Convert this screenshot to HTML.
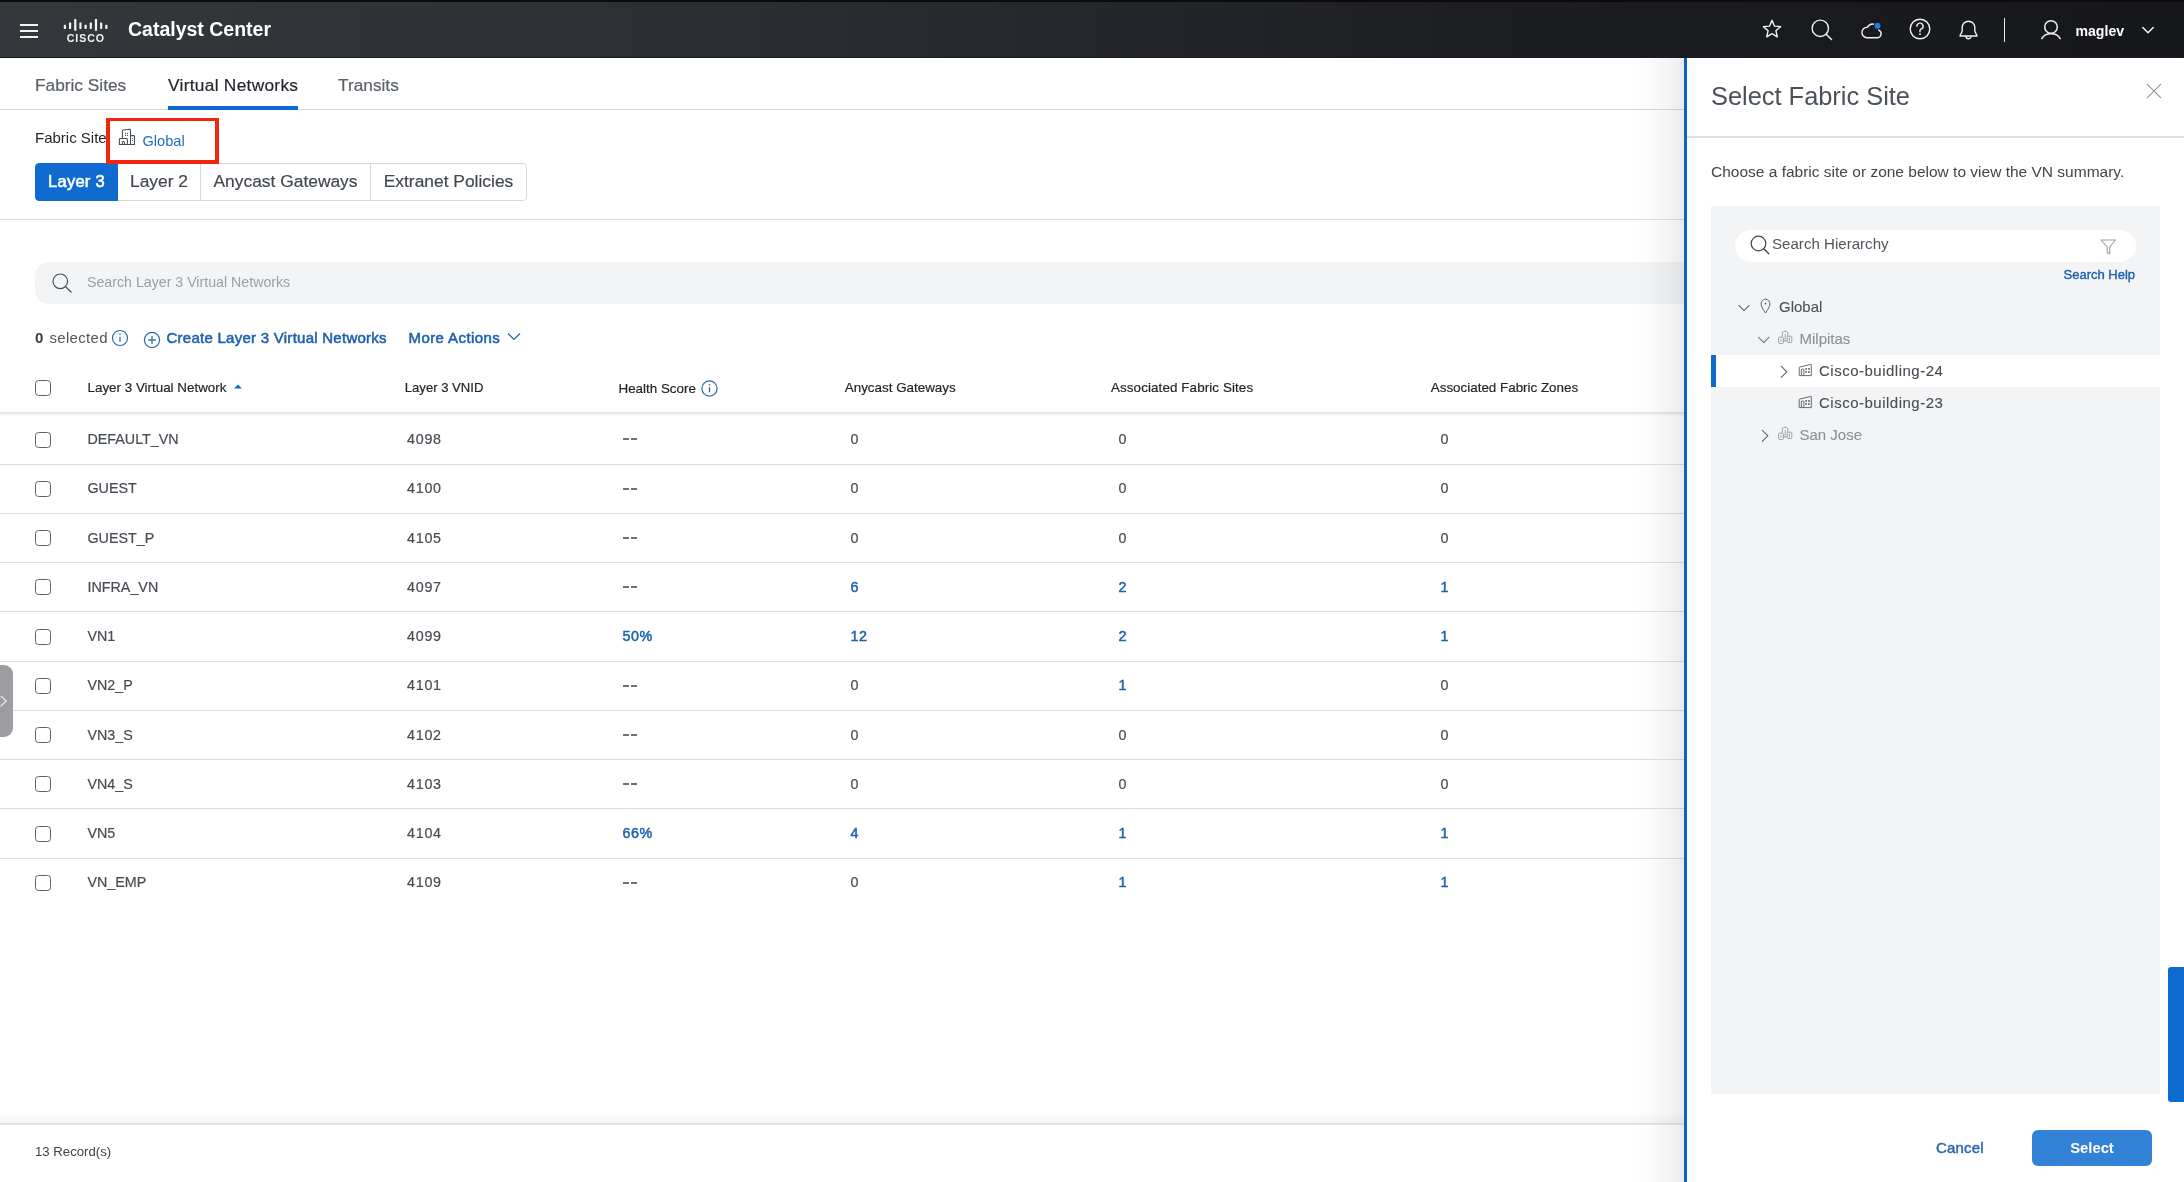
<!DOCTYPE html>
<html><head><meta charset="utf-8">
<style>
*{box-sizing:border-box;margin:0;padding:0}
html,body{width:2184px;height:1182px;overflow:hidden;background:#fff;font-family:"Liberation Sans",sans-serif;position:relative}
.a{position:absolute;white-space:nowrap}
svg{position:absolute;overflow:visible}
#hdr{position:absolute;left:0;top:0;width:2184px;height:58px;background:linear-gradient(90deg,#34383d 0%,#2a2d32 35%,#1b1d21 70%,#15171a 100%);border-top:2px solid #0b0b0c;border-bottom:1px solid #1a1b1e}
.tab{font-size:17.3px;color:#5b6168;top:75px;line-height:20px}
.seg{position:absolute;top:163px;height:38px;border:1px solid #d6d8db;font-size:17.4px;color:#424850;line-height:34px;text-align:center}
.th{font-size:13.4px;color:#1f2328;top:380px;line-height:16px}
.td{font-size:14.3px;color:#474c53;line-height:18px}
.lk{color:#1e62b2;font-weight:700}
.lm{color:#1f61b0;font-weight:400;-webkit-text-stroke:0.55px currentColor}
.cb{position:absolute;width:16px;height:16px;border:1.3px solid #5e6268;border-radius:3.5px;background:#fff}
.dash{position:absolute;width:5.7px;height:2px;background:#6d7278}
.rl{position:absolute;left:0;width:1684px;height:1px;background:#dcdee0}
#root{position:absolute;left:0;top:0;width:2184px;height:1182px;will-change:transform}
.td,.th,.tab,.seg{-webkit-text-stroke:0.2px currentColor}
</style></head><body><div id="root">
<div id="hdr"></div>
<!-- hamburger -->
<div class="a" style="left:20px;top:24px;width:18px;height:2.2px;background:#f2f2f2"></div>
<div class="a" style="left:20px;top:30px;width:18px;height:2.2px;background:#f2f2f2"></div>
<div class="a" style="left:20px;top:36px;width:18px;height:2.2px;background:#f2f2f2"></div>
<!-- cisco logo -->
<svg style="left:0;top:0" width="120" height="50" viewBox="0 0 120 50"><g fill="#f4f4f4"><rect x="63.80" y="24.8" width="2.2" height="4.1" rx="0.6"/><rect x="68.98" y="22.4" width="2.2" height="6.5" rx="0.6"/><rect x="74.16" y="18.9" width="2.2" height="11.9" rx="0.6"/><rect x="79.34" y="22.4" width="2.2" height="6.5" rx="0.6"/><rect x="84.52" y="24.8" width="2.2" height="4.1" rx="0.6"/><rect x="89.70" y="22.4" width="2.2" height="6.5" rx="0.6"/><rect x="94.88" y="18.9" width="2.2" height="11.9" rx="0.6"/><rect x="100.06" y="22.4" width="2.2" height="6.5" rx="0.6"/><rect x="105.24" y="24.8" width="2.2" height="4.1" rx="0.6"/></g><text x="85.8" y="41.6" text-anchor="middle" font-family="Liberation Sans" font-weight="700" font-size="10.6" fill="#f4f4f4" letter-spacing="0.9">CISCO</text></svg>
<div class="a" style="left:128px;top:17px;font-size:19.5px;font-weight:700;color:#fff;line-height:24px">Catalyst Center</div>

<!-- header right icons -->
<svg style="left:1762px;top:19px" width="20" height="20" viewBox="0 0 20 20"><path d="M10 1.3 L12.4 7.1 L18.6 7.6 L13.9 11.7 L15.3 17.8 L10 14.6 L4.7 17.8 L6.1 11.7 L1.4 7.6 L7.6 7.1 Z" fill="none" stroke="#f0f0f0" stroke-width="1.4" stroke-linejoin="round"/></svg>
<svg style="left:1811px;top:19px" width="22" height="22" viewBox="0 0 22 22"><circle cx="9.3" cy="9.3" r="8.2" fill="none" stroke="#f0f0f0" stroke-width="1.4"/><line x1="15.2" y1="15.2" x2="20.5" y2="20.5" stroke="#f0f0f0" stroke-width="1.5" stroke-linecap="round"/></svg>
<svg style="left:1861px;top:21px" width="23" height="19" viewBox="0 0 23 19"><path d="M6 16.8 H16.5 A4 4 0 0 0 17.8 9.2 A6 6 0 0 0 6.5 6.2 A5.3 5.3 0 0 0 6 16.8 Z" fill="none" stroke="#f0f0f0" stroke-width="1.4"/><circle cx="16.5" cy="4.8" r="3.6" fill="#1e7ae0" stroke="#17191d" stroke-width="1"/></svg>
<svg style="left:1909px;top:18px" width="22" height="22" viewBox="0 0 22 22"><circle cx="11" cy="11" r="9.8" fill="none" stroke="#f0f0f0" stroke-width="1.4"/><path d="M7.9 8.3 A3.1 3.1 0 1 1 11.9 11.2 C11.2 11.5 11 12 11 12.8 V13.8" fill="none" stroke="#f0f0f0" stroke-width="1.4" stroke-linecap="round"/><circle cx="11" cy="16.2" r="0.9" fill="#f0f0f0"/></svg>
<svg style="left:1958px;top:19px" width="21" height="22" viewBox="0 0 21 22"><path d="M2 17 C2 15.5 4.2 14 4.2 11.5 V8.5 A6.3 6.3 0 0 1 16.8 8.5 V11.5 C16.8 14 19 15.5 19 17 Z" fill="none" stroke="#f0f0f0" stroke-width="1.4" stroke-linejoin="round"/><path d="M8 17.2 A2.5 2.5 0 0 0 13 17.2" fill="none" stroke="#f0f0f0" stroke-width="1.4"/></svg>
<div class="a" style="left:2003.6px;top:18px;width:1.6px;height:24px;background:#e8e8e8"></div>
<svg style="left:2040px;top:19px" width="23" height="22" viewBox="0 0 23 22"><circle cx="11" cy="8" r="6.3" fill="none" stroke="#f0f0f0" stroke-width="1.5"/><path d="M1.8 19.6 A10 8 0 0 1 20.2 19.6" fill="none" stroke="#f0f0f0" stroke-width="1.5" stroke-linecap="round"/></svg>
<div class="a" style="left:2075.5px;top:21px;font-size:14.1px;font-weight:700;color:#fff;line-height:20px">maglev</div>
<svg style="left:2141px;top:26px" width="14" height="9" viewBox="0 0 14 9"><path d="M1.8 1.5 L7 6.7 L12.2 1.5" fill="none" stroke="#f0f0f0" stroke-width="1.6" stroke-linecap="round"/></svg>

<!-- tabs -->
<div class="a tab" style="left:35px">Fabric Sites</div>
<div class="a tab" style="left:168px;color:#22272d;letter-spacing:0.3px">Virtual Networks</div>
<div class="a tab" style="left:338px">Transits</div>
<div class="a" style="left:0;top:109px;width:1684px;height:1px;background:#d5d7da"></div>
<div class="a" style="left:168px;top:106px;width:130px;height:4px;background:#0d6bd0"></div>

<!-- fabric site -->
<div class="a" style="left:35px;top:129px;font-size:15px;color:#23272c;line-height:18px">Fabric Site:</div>
<div class="a" style="left:106px;top:118px;width:113px;height:46px;border:4px solid #f2260a;border-top-width:3px;z-index:5"></div>
<svg style="left:115px;top:124px" width="24" height="24" viewBox="0 0 24 24"><g fill="none" stroke="#474c53" stroke-width="1.05" stroke-linejoin="round"><path d="M7.4 14.5 V7 Q7.4 6.1 8.3 6 L14.6 5.3 Q15.5 5.3 15.5 6.2 V20.5"/><path d="M15.5 11.6 H18.6 Q19.5 11.6 19.5 12.5 V20.5 H4.4 V15.4 Q4.4 14.5 5.3 14.5 H11.5 Q12.4 14.5 12.4 15.4 V20.5"/><path d="M7.3 20.5 V18.5 A1.1 1.1 0 0 1 9.5 18.5 V20.5"/></g><g fill="#474c53"><circle cx="10.5" cy="9.4" r="0.6"/><circle cx="12.5" cy="9.4" r="0.6"/><circle cx="10.5" cy="11.4" r="0.6"/><circle cx="12.5" cy="11.4" r="0.6"/><circle cx="17.5" cy="14.5" r="0.6"/><circle cx="17.5" cy="16.5" r="0.6"/></g></svg>
<div class="a" style="left:142.5px;top:132px;font-size:14.6px;color:#1f6bc0;line-height:18px">Global</div>

<!-- segmented -->
<div class="seg" style="left:35px;width:83px;background:#0f6bcf;border-color:#0f6bcf;color:#fff;font-weight:400;font-size:16.5px;letter-spacing:0.25px;-webkit-text-stroke:0.6px #fff;border-radius:4px 0 0 4px">Layer 3</div>
<div class="seg" style="left:118px;width:83px;border-left:none">Layer 2</div>
<div class="seg" style="left:200px;width:171px">Anycast Gateways</div>
<div class="seg" style="left:370px;width:157px;border-radius:0 4px 4px 0">Extranet Policies</div>
<div class="a" style="left:0;top:219px;width:1684px;height:1px;background:#dcdee1"></div>

<!-- search bar -->
<div class="a" style="left:35px;top:262px;width:1700px;height:42px;background:#f3f4f6;border-radius:14px 0 0 14px"></div>
<svg style="left:52px;top:273px" width="21" height="20" viewBox="0 0 21 20"><circle cx="8.3" cy="8.3" r="7.3" fill="none" stroke="#4a4f55" stroke-width="1.2"/><line x1="13.6" y1="13.6" x2="19" y2="19" stroke="#4a4f55" stroke-width="1.3" stroke-linecap="round"/></svg>
<div class="a" style="left:87px;top:273px;font-size:14.2px;color:#9ba0a6;line-height:18px">Search Layer 3 Virtual Networks</div>

<!-- selected row -->
<div class="a" style="left:35px;top:329px;font-size:15px;color:#3a3f45;line-height:18px;font-weight:700">0</div><div class="a" style="left:49.5px;top:329px;font-size:15px;color:#50565c;line-height:18px;letter-spacing:0.3px">selected</div>
<svg style="left:111px;top:329px" width="18" height="18" viewBox="0 0 18 18"><circle cx="9" cy="9" r="7.5" fill="none" stroke="#2d66ad" stroke-width="1.2"/><line x1="9" y1="7.8" x2="9" y2="12.8" stroke="#2d66ad" stroke-width="1.3"/><circle cx="9" cy="5.3" r="0.8" fill="#2d66ad"/></svg>
<svg style="left:143px;top:331px" width="18" height="18" viewBox="0 0 18 18"><circle cx="9" cy="9" r="7.6" fill="none" stroke="#2d66ad" stroke-width="1.2"/><line x1="9" y1="5" x2="9" y2="13" stroke="#2d66ad" stroke-width="1.3"/><line x1="5" y1="9" x2="13" y2="9" stroke="#2d66ad" stroke-width="1.3"/></svg>
<div class="a lm" style="left:166.5px;top:329px;font-size:15px;line-height:18px;letter-spacing:0.26px">Create Layer 3 Virtual Networks</div>
<div class="a lm" style="left:408.5px;top:329px;font-size:15px;line-height:18px;letter-spacing:0.42px">More Actions</div>
<svg style="left:507px;top:332px" width="14" height="10" viewBox="0 0 14 10"><path d="M1 1.5 L7 7.5 L13 1.5" fill="none" stroke="#1f61b0" stroke-width="1.2"/></svg>

<!-- table header -->
<div class="cb" style="left:35px;top:380px"></div>
<div class="a th" style="left:87.5px;letter-spacing:0px">Layer 3 Virtual Network</div>
<svg style="left:233px;top:384px" width="10" height="5" viewBox="0 0 10 5"><path d="M1 4.5 L5 0.5 L9 4.5 Z" fill="#0d6bd0"/></svg>
<div class="a th" style="left:404.8px;font-size:13.1px">Layer 3 VNID</div>
<div class="a th" style="left:618.5px;top:381px">Health Score</div>
<svg style="left:700px;top:379px" width="19" height="19" viewBox="0 0 19 19"><circle cx="9.5" cy="9.5" r="7.6" fill="none" stroke="#2d66ad" stroke-width="1.2"/><line x1="9.5" y1="8.3" x2="9.5" y2="13.3" stroke="#2d66ad" stroke-width="1.3"/><circle cx="9.5" cy="5.8" r="0.8" fill="#2d66ad"/></svg>
<div class="a th" style="left:844.8px">Anycast Gateways</div>
<div class="a th" style="left:1111px;letter-spacing:0.1px">Associated Fabric Sites</div>
<div class="a th" style="left:1430.8px;letter-spacing:0px">Associated Fabric Zones</div>
<div class="a" style="left:0;top:412px;width:1684px;height:2px;background:#e4e6e8"></div>
<div class="a" style="left:0;top:414px;width:1684px;height:2px;background:linear-gradient(#f0f1f2,#fff)"></div>

<div id="rows"><div class="cb" style="left:35px;top:432px"></div>
<div class="a td" style="left:87.5px;top:430.0px">DEFAULT_VN</div>
<div class="a td" style="left:407px;top:430.0px;letter-spacing:0.75px">4098</div>
<div class="a dash" style="left:623px;top:438px"></div><div class="a dash" style="left:631.3px;top:438px"></div>
<div class="a td" style="left:850.5px;top:430.0px;letter-spacing:0.6px">0</div>
<div class="a td" style="left:1118.5px;top:430.0px;letter-spacing:0.6px">0</div>
<div class="a td" style="left:1440.5px;top:430.0px;letter-spacing:0.6px">0</div>
<div class="rl" style="top:464px"></div>
<div class="cb" style="left:35px;top:481px"></div>
<div class="a td" style="left:87.5px;top:479.2px">GUEST</div>
<div class="a td" style="left:407px;top:479.2px;letter-spacing:0.75px">4100</div>
<div class="a dash" style="left:623px;top:488px"></div><div class="a dash" style="left:631.3px;top:488px"></div>
<div class="a td" style="left:850.5px;top:479.2px;letter-spacing:0.6px">0</div>
<div class="a td" style="left:1118.5px;top:479.2px;letter-spacing:0.6px">0</div>
<div class="a td" style="left:1440.5px;top:479.2px;letter-spacing:0.6px">0</div>
<div class="rl" style="top:513px"></div>
<div class="cb" style="left:35px;top:530px"></div>
<div class="a td" style="left:87.5px;top:528.5px">GUEST_P</div>
<div class="a td" style="left:407px;top:528.5px;letter-spacing:0.75px">4105</div>
<div class="a dash" style="left:623px;top:537px"></div><div class="a dash" style="left:631.3px;top:537px"></div>
<div class="a td" style="left:850.5px;top:528.5px;letter-spacing:0.6px">0</div>
<div class="a td" style="left:1118.5px;top:528.5px;letter-spacing:0.6px">0</div>
<div class="a td" style="left:1440.5px;top:528.5px;letter-spacing:0.6px">0</div>
<div class="rl" style="top:562px"></div>
<div class="cb" style="left:35px;top:579px"></div>
<div class="a td" style="left:87.5px;top:577.8px">INFRA_VN</div>
<div class="a td" style="left:407px;top:577.8px;letter-spacing:0.75px">4097</div>
<div class="a dash" style="left:623px;top:586px"></div><div class="a dash" style="left:631.3px;top:586px"></div>
<div class="a td" style="left:850.5px;top:577.8px;letter-spacing:0.6px;color:#1f61b0;-webkit-text-stroke:0.5px #1f61b0">6</div>
<div class="a td" style="left:1118.5px;top:577.8px;letter-spacing:0.6px;color:#1f61b0;-webkit-text-stroke:0.5px #1f61b0">2</div>
<div class="a td" style="left:1440.5px;top:577.8px;letter-spacing:0.6px;color:#1f61b0;-webkit-text-stroke:0.5px #1f61b0">1</div>
<div class="rl" style="top:611px"></div>
<div class="cb" style="left:35px;top:629px"></div>
<div class="a td" style="left:87.5px;top:627.0px">VN1</div>
<div class="a td" style="left:407px;top:627.0px;letter-spacing:0.75px">4099</div>
<div class="a td" style="left:622.5px;top:627.0px;letter-spacing:0.6px;color:#1f61b0;-webkit-text-stroke:0.5px #1f61b0">50%</div>
<div class="a td" style="left:850.5px;top:627.0px;letter-spacing:0.6px;color:#1f61b0;-webkit-text-stroke:0.5px #1f61b0">12</div>
<div class="a td" style="left:1118.5px;top:627.0px;letter-spacing:0.6px;color:#1f61b0;-webkit-text-stroke:0.5px #1f61b0">2</div>
<div class="a td" style="left:1440.5px;top:627.0px;letter-spacing:0.6px;color:#1f61b0;-webkit-text-stroke:0.5px #1f61b0">1</div>
<div class="rl" style="top:661px"></div>
<div class="cb" style="left:35px;top:678px"></div>
<div class="a td" style="left:87.5px;top:676.2px">VN2_P</div>
<div class="a td" style="left:407px;top:676.2px;letter-spacing:0.75px">4101</div>
<div class="a dash" style="left:623px;top:685px"></div><div class="a dash" style="left:631.3px;top:685px"></div>
<div class="a td" style="left:850.5px;top:676.2px;letter-spacing:0.6px">0</div>
<div class="a td" style="left:1118.5px;top:676.2px;letter-spacing:0.6px;color:#1f61b0;-webkit-text-stroke:0.5px #1f61b0">1</div>
<div class="a td" style="left:1440.5px;top:676.2px;letter-spacing:0.6px">0</div>
<div class="rl" style="top:710px"></div>
<div class="cb" style="left:35px;top:727px"></div>
<div class="a td" style="left:87.5px;top:725.5px">VN3_S</div>
<div class="a td" style="left:407px;top:725.5px;letter-spacing:0.75px">4102</div>
<div class="a dash" style="left:623px;top:734px"></div><div class="a dash" style="left:631.3px;top:734px"></div>
<div class="a td" style="left:850.5px;top:725.5px;letter-spacing:0.6px">0</div>
<div class="a td" style="left:1118.5px;top:725.5px;letter-spacing:0.6px">0</div>
<div class="a td" style="left:1440.5px;top:725.5px;letter-spacing:0.6px">0</div>
<div class="rl" style="top:759px"></div>
<div class="cb" style="left:35px;top:776px"></div>
<div class="a td" style="left:87.5px;top:774.8px">VN4_S</div>
<div class="a td" style="left:407px;top:774.8px;letter-spacing:0.75px">4103</div>
<div class="a dash" style="left:623px;top:783px"></div><div class="a dash" style="left:631.3px;top:783px"></div>
<div class="a td" style="left:850.5px;top:774.8px;letter-spacing:0.6px">0</div>
<div class="a td" style="left:1118.5px;top:774.8px;letter-spacing:0.6px">0</div>
<div class="a td" style="left:1440.5px;top:774.8px;letter-spacing:0.6px">0</div>
<div class="rl" style="top:808px"></div>
<div class="cb" style="left:35px;top:826px"></div>
<div class="a td" style="left:87.5px;top:824.0px">VN5</div>
<div class="a td" style="left:407px;top:824.0px;letter-spacing:0.75px">4104</div>
<div class="a td" style="left:622.5px;top:824.0px;letter-spacing:0.6px;color:#1f61b0;-webkit-text-stroke:0.5px #1f61b0">66%</div>
<div class="a td" style="left:850.5px;top:824.0px;letter-spacing:0.6px;color:#1f61b0;-webkit-text-stroke:0.5px #1f61b0">4</div>
<div class="a td" style="left:1118.5px;top:824.0px;letter-spacing:0.6px;color:#1f61b0;-webkit-text-stroke:0.5px #1f61b0">1</div>
<div class="a td" style="left:1440.5px;top:824.0px;letter-spacing:0.6px;color:#1f61b0;-webkit-text-stroke:0.5px #1f61b0">1</div>
<div class="rl" style="top:858px"></div>
<div class="cb" style="left:35px;top:875px"></div>
<div class="a td" style="left:87.5px;top:873.2px">VN_EMP</div>
<div class="a td" style="left:407px;top:873.2px;letter-spacing:0.75px">4109</div>
<div class="a dash" style="left:623px;top:882px"></div><div class="a dash" style="left:631.3px;top:882px"></div>
<div class="a td" style="left:850.5px;top:873.2px;letter-spacing:0.6px">0</div>
<div class="a td" style="left:1118.5px;top:873.2px;letter-spacing:0.6px;color:#1f61b0;-webkit-text-stroke:0.5px #1f61b0">1</div>
<div class="a td" style="left:1440.5px;top:873.2px;letter-spacing:0.6px;color:#1f61b0;-webkit-text-stroke:0.5px #1f61b0">1</div></div><!--rowsend-->

<!-- footer -->
<div class="a" style="left:0;top:1112px;width:1684px;height:12px;background:linear-gradient(rgba(255,255,255,0),rgba(235,236,238,0.6))"></div>
<div class="a" style="left:0;top:1123px;width:1684px;height:2px;background:#e3e5e7"></div>
<div class="a" style="left:35px;top:1144px;font-size:13.2px;color:#3d434a;line-height:16px">13 Record(s)</div>

<!-- left collapse tab -->
<div class="a" style="left:-10px;top:665px;width:23px;height:72px;background:#9c9da1;border-radius:9px"></div>
<svg style="left:0;top:695px" width="8" height="13" viewBox="0 0 8 13"><path d="M0.6 0.8 L6.3 6 L0.6 11.4" fill="none" stroke="#f4f4f5" stroke-width="1.1"/></svg>

<!-- panel shadow -->
<div class="a" style="left:1628px;top:58px;width:56px;height:1124px;background:linear-gradient(90deg,rgba(0,0,0,0),rgba(0,0,0,0.012) 35%,rgba(0,0,0,0.04) 70%,rgba(0,0,0,0.08))"></div>
<!-- panel -->
<div class="a" style="left:1684px;top:58px;width:500px;height:1124px;background:#fff;border-left:3px solid #1361b8"></div>
<div class="a" style="left:1711px;top:80.5px;font-size:25.4px;color:#4a5159;line-height:30px">Select Fabric Site</div>
<svg style="left:2145px;top:82px" width="18" height="18" viewBox="0 0 18 18"><path d="M2 2 L16 16 M16 2 L2 16" stroke="#7b8086" stroke-width="1.05"/></svg>
<div class="a" style="left:1687px;top:136px;width:497px;height:2px;background:#dfe1e4"></div>
<div class="a" style="left:1711px;top:163px;font-size:15.5px;color:#40464d;line-height:18px;letter-spacing:0px">Choose a fabric site or zone below to view the VN summary.</div>

<div class="a" style="left:1711px;top:206px;width:449px;height:888px;background:#f3f4f6"></div>
<div class="a" style="left:1735px;top:230px;width:401px;height:32px;background:#fff;border-radius:16px"></div>
<svg style="left:1750px;top:235px" width="20" height="20" viewBox="0 0 20 20"><circle cx="8.5" cy="8.5" r="7.3" fill="none" stroke="#3f444a" stroke-width="1.2"/><line x1="13.8" y1="13.8" x2="18.8" y2="18.8" stroke="#3f444a" stroke-width="1.3" stroke-linecap="round"/></svg>
<div class="a" style="left:1772px;top:235px;font-size:15.1px;color:#50565d;line-height:18px">Search Hierarchy</div>
<svg style="left:2100px;top:239px" width="17" height="16" viewBox="0 0 17 16"><path d="M1 1 H15.5 L9.7 8 V14.8 L7.2 13.5 V8 Z" fill="none" stroke="#9aa0a6" stroke-width="1.1" stroke-linejoin="round"/></svg>
<div class="a lm" style="left:2063.5px;top:267px;font-size:13px;line-height:16px;-webkit-text-stroke-width:0.4px">Search Help</div>

<!-- tree -->
<div class="a" style="left:1711px;top:355px;width:449px;height:32px;background:#fff"></div>
<div class="a" style="left:1711px;top:355px;width:5px;height:32px;background:#0d6bd0"></div>
<svg style="left:1737px;top:303px" width="14" height="9" viewBox="0 0 14 9"><path d="M1.5 2.2 L7 7.6 L12.5 2.2" fill="none" stroke="#585e65" stroke-width="1.05"/></svg>
<svg style="left:1760px;top:298px" width="12" height="17" viewBox="0 0 12 17"><path d="M5.5 15 C3 11.2 1.1 8.6 1.1 5.9 A4.4 4.8 0 0 1 9.9 5.9 C9.9 8.6 8 11.2 5.5 15 Z" fill="none" stroke="#5f656c" stroke-width="1"/><circle cx="5.5" cy="5.6" r="0.85" fill="#4a4f55"/></svg>
<div class="a td" style="-webkit-text-stroke:0.1px currentColor;left:1779px;top:298px;font-size:15px;color:#4a5057">Global</div>

<svg style="left:1757px;top:335px" width="14" height="9" viewBox="0 0 14 9"><path d="M1.3 2 L6.8 7.5 L12.3 2" fill="none" stroke="#585e65" stroke-width="1.05"/></svg>
<svg style="left:1774px;top:326px" width="24" height="24" viewBox="0 0 24 24"><g fill="none" stroke="#9ea3a9" stroke-width="1" stroke-linejoin="round"><path d="M8.3 10.9 V6.3 L11.2 5.1 L13.8 6.3 V10.2"/><line x1="11.2" y1="8" x2="11.2" y2="15.3"/><path d="M9 15 H13.3"/><rect x="4.6" y="11.1" width="4.9" height="6.5" rx="1.4"/><line x1="7" y1="13" x2="7" y2="16"/><rect x="13.3" y="10.2" width="4.5" height="6.4" rx="0.6"/><line x1="15.5" y1="11.5" x2="15.5" y2="15.5"/></g></svg>
<div class="a td" style="-webkit-text-stroke:0.1px currentColor;left:1799.5px;top:330px;font-size:15px;color:#8b9097">Milpitas</div>

<svg style="left:1779px;top:365px" width="10" height="14" viewBox="0 0 10 14"><path d="M2 1 L7.8 6.8 L2 12.6" fill="none" stroke="#565c63" stroke-width="1.05"/></svg>
<svg style="left:1798px;top:363px" width="15" height="14" viewBox="0 0 15 14"><g fill="none" stroke="#5f656c" stroke-width="0.95" stroke-linejoin="round"><path d="M1.2 12.6 V4.6 Q1.2 4.1 1.8 4 L12.7 1.4 Q13.3 1.3 13.3 1.9 V12.6 Z"/><path d="M3.3 12.6 V7.1 A1.3 1.3 0 0 1 5.9 7.1 V12.6"/></g><g fill="#5f656c"><rect x="7.2" y="5" width="1.8" height="1.8" rx="0.4"/><rect x="10" y="5" width="1.8" height="1.8" rx="0.4"/><rect x="7.2" y="8" width="1.8" height="1.8" rx="0.4"/><rect x="10" y="8" width="1.8" height="1.8" rx="0.4"/></g></svg>
<div class="a td" style="-webkit-text-stroke:0.1px currentColor;left:1819px;top:362px;font-size:15px;color:#474c53;letter-spacing:0.5px">Cisco-buidling-24</div>

<svg style="left:1798px;top:395px" width="15" height="14" viewBox="0 0 15 14"><g fill="none" stroke="#5f656c" stroke-width="0.95" stroke-linejoin="round"><path d="M1.2 12.6 V4.6 Q1.2 4.1 1.8 4 L12.7 1.4 Q13.3 1.3 13.3 1.9 V12.6 Z"/><path d="M3.3 12.6 V7.1 A1.3 1.3 0 0 1 5.9 7.1 V12.6"/></g><g fill="#5f656c"><rect x="7.2" y="5" width="1.8" height="1.8" rx="0.4"/><rect x="10" y="5" width="1.8" height="1.8" rx="0.4"/><rect x="7.2" y="8" width="1.8" height="1.8" rx="0.4"/><rect x="10" y="8" width="1.8" height="1.8" rx="0.4"/></g></svg>
<div class="a td" style="-webkit-text-stroke:0.1px currentColor;left:1819px;top:394px;font-size:15px;color:#474c53;letter-spacing:0.5px">Cisco-building-23</div>

<svg style="left:1760px;top:429px" width="10" height="14" viewBox="0 0 10 14"><path d="M2 1 L7.8 6.8 L2 12.6" fill="none" stroke="#565c63" stroke-width="1.05"/></svg>
<svg style="left:1774px;top:422px" width="24" height="24" viewBox="0 0 24 24"><g fill="none" stroke="#9ea3a9" stroke-width="1" stroke-linejoin="round"><path d="M8.3 10.9 V6.3 L11.2 5.1 L13.8 6.3 V10.2"/><line x1="11.2" y1="8" x2="11.2" y2="15.3"/><path d="M9 15 H13.3"/><rect x="4.6" y="11.1" width="4.9" height="6.5" rx="1.4"/><line x1="7" y1="13" x2="7" y2="16"/><rect x="13.3" y="10.2" width="4.5" height="6.4" rx="0.6"/><line x1="15.5" y1="11.5" x2="15.5" y2="15.5"/></g></svg>
<div class="a td" style="-webkit-text-stroke:0.1px currentColor;left:1799.5px;top:426px;font-size:15px;color:#8b9097">San Jose</div>

<!-- scrollbar -->
<div class="a" style="left:2168px;top:967px;width:20px;height:135px;background:#0d6bd0;border-radius:3px"></div>

<!-- buttons -->
<div class="a lm" style="left:1936px;top:1139px;font-size:15px;line-height:18px;color:#2d66ad;letter-spacing:0.2px;-webkit-text-stroke-width:0.45px">Cancel</div>
<div class="a" style="left:2032px;top:1130px;width:120px;height:36px;background:#3282d7;border-radius:6px;color:#fff;font-weight:700;font-size:14.8px;line-height:36px;text-align:center">Select</div>
</div></body></html>
